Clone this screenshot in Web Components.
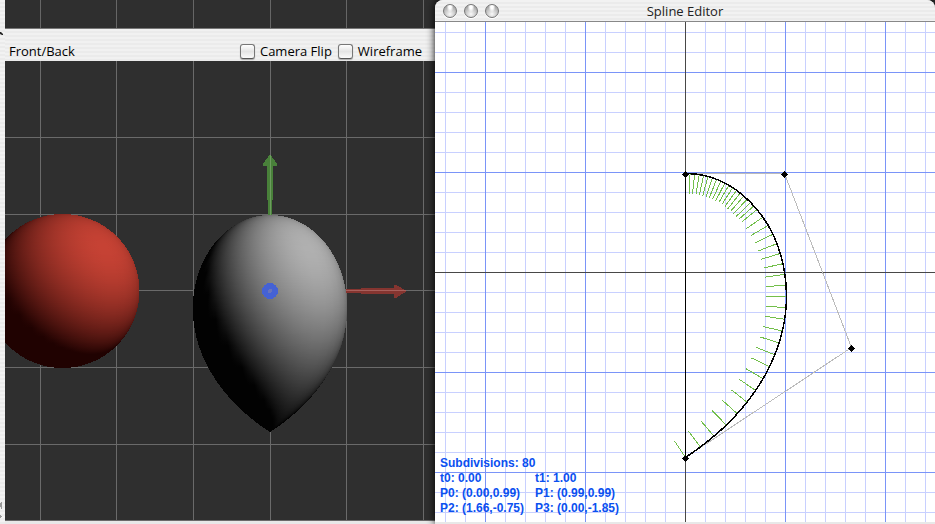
<!DOCTYPE html>
<html lang="en">
<head>
<meta charset="utf-8">
<title>Spline Editor</title>
<style>
  html, body { margin: 0; height: 100%; }
  body { font: 13px/16px "Open Sans", "Noto Sans", sans-serif; color: #000; background: #2e2e2e; overflow: hidden; }
</style>
</head>
<body>
<model-workspace></model-workspace>
<script>
const define = (name, html, setup) => {
  const template = document.createElement('template');
  template.innerHTML = html;
  customElements.define(name, class extends HTMLElement {
    constructor() {
      super();
      this.attachShadow({ mode: 'open' }).append(template.content.cloneNode(true));
    }
    connectedCallback() { if (setup) setup(this.shadowRoot, this); }
  });
};

const bezier = (p, t) => {
  const s = 1 - t;
  const at = i => s*s*s*p[0][i] + 3*s*s*t*p[1][i] + 3*s*t*t*p[2][i] + t*t*t*p[3][i];
  const d = i => 3*(s*s*(p[1][i]-p[0][i]) + 2*s*t*(p[2][i]-p[1][i]) + t*t*(p[3][i]-p[2][i]));
  return { x: at(0), y: at(1), dx: d(0), dy: d(1) };
};
const PROFILE = [[0, .99], [.99, .99], [1.66, -.75], [0, -1.85]];

/* Shades a surface of revolution row by row with one directional light. */
const LIGHT = [.54, .57, .62];
const shade = (id, cx, top, rows, low, high) => {
  let defs = '', body = '';
  rows.forEach(({ r, nr, ny }, i) => {
    if (r < .5) return;
    let stops = '';
    for (let k = 0; k <= 20; k++) {
      const u = -Math.cos(Math.PI * k / 20);
      const lit = Math.max(0, nr*u*LIGHT[0] + ny*LIGHT[1] + nr*Math.sqrt(Math.max(0, 1-u*u))*LIGHT[2]);
      const c = low.map((v, j) => Math.round(v + (high[j]-v)*lit));
      stops += `<stop offset="${(u+1)/2}" stop-color="rgb(${c})"/>`;
    }
    defs += `<linearGradient id="${id}${i}">${stops}</linearGradient>`;
    body += `<rect x="${cx-r}" y="${top+i}" width="${2*r}" height="1" fill="url(#${id}${i})"/>`;
  });
  return `<defs>${defs}</defs><g shape-rendering="crispEdges">${body}</g>`;
};
const sphereRows = R => Array.from({ length: 2*R }, (_, i) => {
  const ny = (R - i - .5) / R, nr = Math.sqrt(1 - ny*ny);
  return { r: R*nr, nr, ny };
});
const dropRows = unit => {
  const rows = [], count = Math.floor(2.84*unit);
  let t = 0;
  for (let i = 0; i < count; i++) {
    const y = .99 - (i + .5)/unit;
    while (t < 1 && bezier(PROFILE, t).y > y) t += .0005;
    const b = bezier(PROFILE, Math.min(t, 1)), len = Math.hypot(b.dx, b.dy);
    rows.push({ r: b.x*unit, nr: -b.dy/len, ny: b.dx/len });
  }
  return rows;
};
const gridLines = (xs, ys, color) =>
  `<g fill="${color}">` + xs.map(x => `<rect x="${x}" y="0" width="1" height="2000"/>`).join('') +
  ys.map(y => `<rect x="0" y="${y}" width="2000" height="1"/>`).join('') + '</g>';
const COLUMNS = [35, 111, 188, 265, 341, 418, 494];

define('scene-view', `
  <style>
    :host { display: block; background: #2f2f2f; overflow: hidden; min-height: 0; }
    svg { display: block; width: 100%; height: 100%; }
  </style>
  <svg role="img" aria-label="Scene" preserveAspectRatio="xMinYMin slice"></svg>
`, (root, host) => {
  const svg = root.querySelector('svg');
  if (host.hasAttribute('empty')) {
    svg.setAttribute('viewBox', '0 0 430 28');
    svg.innerHTML = gridLines(COLUMNS, [], '#666');
    return;
  }
  svg.setAttribute('viewBox', '0 0 430 460');
  svg.innerHTML = gridLines(COLUMNS, [76, 153, 229, 306, 383, 459], '#6a6a6a')
    + shade('s', 57.5, 153, sphereRows(77), [32, 2, 1], [198, 66, 52])
    + shade('d', 265, 154, dropRows(76.5), [2, 2, 2], [176, 176, 176])
    + `<g shape-rendering="crispEdges">
        <path d="M265 93L272 103V105H268V139H267V154H263V139H262V105H258V103Z" fill="#49813a"/>
        <path d="M265 94h1v60h-1z" fill="#6d9c5f"/>
        <path d="M341 228H356V227H389V224H391L402 230L391 237H389V233H356V232H341Z" fill="#853530"/>
        <path d="M341 229h60v1h-60z" fill="#a85f5b"/>
        <circle cx="265" cy="230" r="8" fill="#4562d4"/>
        <circle cx="265" cy="230" r="2" fill="#6874bd"/>
      </g>`;
});

define('check-option', `
  <style>
    :host { display: block; }
    label { display: flex; align-items: center; gap: 5px; }
    input { appearance: none; box-sizing: border-box; width: 15px; height: 15px; margin: 0;
      border: 1px solid #777; border-bottom-color: #555; border-radius: 3px;
      background: linear-gradient(#fff, #e4e4e4 50%, #fafafa); box-shadow: 0 1px 1px #aaa; }
    input:checked { background: #79a7e8; }
  </style>
  <label><input type="checkbox"><span><slot></slot></span></label>
`);

define('view-panel', `
  <style>
    :host { display: grid; grid-template-rows: 28px 33px 1fr; min-height: 0; min-width: 0; }
    header { display: flex; box-sizing: border-box; align-items: center; gap: 6px; padding: 12px 13px 0 4px;
      border-top: 1px solid #777; background: repeating-linear-gradient(#f1f1f1 0 2px, #ebebeb 2px 4px); white-space: nowrap; }
    h2 { font: inherit; margin: 0 auto 0 0; }
  </style>
  <scene-view empty></scene-view>
  <header>
    <h2><slot></slot></h2>
    <check-option>Camera Flip</check-option>
    <check-option>Wireframe</check-option>
  </header>
  <scene-view></scene-view>
`);

define('window-button', `
  <style>
    :host { display: block; }
    button { display: block; box-sizing: border-box; width: 14px; height: 14px; padding: 0; border: 1px solid #777; border-radius: 50%;
      background: radial-gradient(ellipse at 50% 15%, #fff 0 15%, transparent 40%), radial-gradient(circle at 50% 75%, #fafafa, #a8a8a8 75%);
      box-shadow: 0 1px 0 #fff; }
  </style>
  <button type="button"></button>
`, (root, host) => root.querySelector('button').setAttribute('aria-label', host.getAttribute('name')));

define('spline-graph', `
  <style>
    :host { display: block; background: #fff; overflow: hidden; min-height: 0; }
    svg { display: block; width: 100%; height: 100%; }
  </style>
  <svg role="img" aria-label="Spline curve" viewBox="0 0 500 500" preserveAspectRatio="xMidYMid slice" shape-rendering="crispEdges"></svg>
`, root => {
  const minor = Array.from({ length: 25 }, (_, i) => 10 + i*20);
  const major = [50, 150, 250, 350, 450];
  const p = PROFILE.map(([x, y]) => [250.5 + x*100, 250.5 - y*100]);
  const curve = `M${p[0]}C${p[1]} ${p[2]} ${p[3]}`;
  let hairs = '';
  for (let k = 1; k <= 64; k += k < 18 ? 1 : 2) {
    const b = bezier(p, k/64), len = Math.hypot(b.dx, b.dy);
    hairs += `M${b.x} ${b.y}l${-b.dy/len*20} ${b.dx/len*20}`;
  }
  root.querySelector('svg').innerHTML =
    gridLines(minor, minor, '#c8d0ff') + gridLines(major, major, '#7a94f8') + gridLines([250], [250], '#484848')
    + `<g fill="none">
        <path d="${hairs}" stroke="#73bf4b"/>
        <path d="M${p[0]}L${p[1]}L${p[2]}L${p[3]}" stroke="#bbb"/>
        <path d="M${p[0]}V${p[3][1]}" stroke="#000"/>
        <path d="${curve}" stroke="#000" stroke-width="1.5"/>
      </g>`
    + p.map(([x, y]) => [Math.floor(x), Math.floor(y + .5)])
       .map(([x, y]) => `<path d="M${x} ${y-3}h1v1h1v1h1v1h1v1h-1v1h-1v1h-1v1h-1v-1h-1v-1h-1v-1h-1v-1h1v-1h1v-1h1z"/>`).join('');
});

define('spline-readout', `
  <style>
    :host { display: grid; grid-template-columns: 95px auto; font: bold 12px/15px "Liberation Sans", Arial, sans-serif; color: #0a50f0; white-space: nowrap; }
    .wide { grid-column: 1 / -1; }
  </style>
  <span class="wide">Subdivisions: 80</span>
  <span>t0: 0.00</span><span>t1: 1.00</span>
  <span>P0: (0.00,0.99)</span><span>P1: (0.99,0.99)</span>
  <span>P2: (1.66,-0.75)</span><span>P3: (0.00,-1.85)</span>
`);

define('tool-window', `
  <style>
    :host { display: grid; grid-template-rows: 22px 1fr 2px; min-height: 0; min-width: 0; position: relative;
      border-radius: 8px 8px 0 0; background: #e8e8e8; box-shadow: 0 0 8px #000; }
    header { display: grid; grid-template-columns: 1fr auto 1fr; align-items: center; box-sizing: border-box; padding: 0 8px;
      border-bottom: 1px solid #888; border-radius: 8px 8px 0 0;
      background: repeating-linear-gradient(#f2f2f2 0 2px, #ebebeb 2px 4px); }
    nav { display: flex; gap: 7px; }
    h1 { font: inherit; color: #222; margin: 0; }
    spline-readout { position: absolute; left: 5px; bottom: 8px; }
  </style>
  <header>
    <nav><window-button name="Close"></window-button><window-button name="Minimize"></window-button><window-button name="Zoom"></window-button></nav>
    <h1><slot></slot></h1>
  </header>
  <spline-graph></spline-graph>
  <spline-readout></spline-readout>
`);

define('edge-strip', `
  <style>
    :host { display: flex; flex-direction: column; justify-content: space-between;
      background: repeating-linear-gradient(#f2f2f2 0 2px, #ebebeb 2px 4px); }
    svg { display: block; width: 5px; }
  </style>
  <svg height="40" viewBox="0 0 5 40" aria-hidden="true"><path d="M0 32H1L3 34V35H2L0 34Z" fill="#222"/></svg>
  <svg height="24" viewBox="0 0 5 24" aria-hidden="true"><path d="M0 3H1V2H2V9H1V7H0ZM0 15H1V16H2V17H1V18H0Z" fill="#999"/></svg>
`);

define('model-workspace', `
  <style>
    :host { display: grid; grid-template-columns: 5px 430fr 500fr; grid-template-rows: 100vh; }
    view-panel { border-bottom: 3px solid #e8e8e8; }
  </style>
  <edge-strip></edge-strip>
  <view-panel>Front/Back</view-panel>
  <tool-window>Spline Editor</tool-window>
`);
</script>
</body>
</html>
